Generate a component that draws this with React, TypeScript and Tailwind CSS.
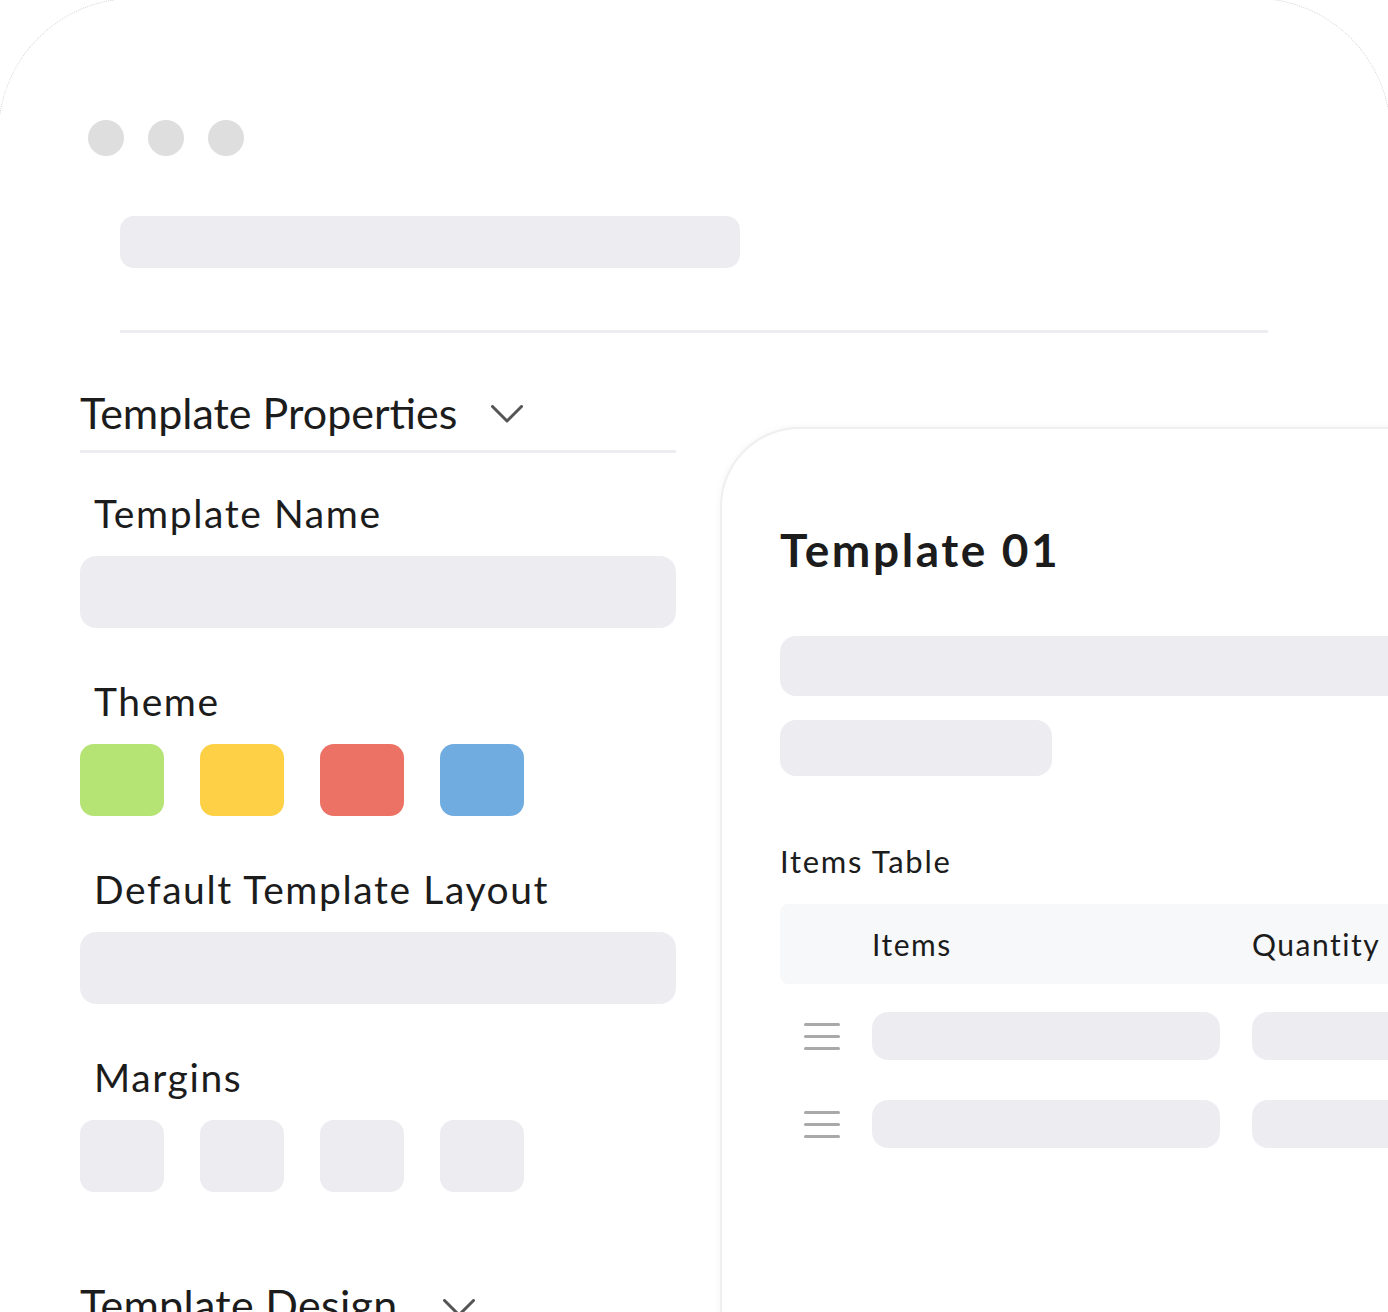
import React from "react";

function Chevron() {
  return (
    <svg width="32" height="18" viewBox="0 0 32 18" fill="none" className="shrink-0">
      <path d="M1.5 1.5 L16 16 L30.5 1.5" stroke="#555555" strokeWidth="3" strokeLinecap="round" strokeLinejoin="round" />
    </svg>
  );
}

function Hamburger() {
  return (
    <div className="flex w-[36px] shrink-0 flex-col gap-[9px]">
      <div className="h-[3px] w-full rounded-full bg-[#a9a9a9]" />
      <div className="h-[3px] w-full rounded-full bg-[#a9a9a9]" />
      <div className="h-[3px] w-full rounded-full bg-[#a9a9a9]" />
    </div>
  );
}

function Label({ text, mt }: { text: string; mt: string }) {
  return (
    <div className={`${mt} mb-[15px] h-[56px] pl-[14px] text-[39px] leading-[56px] tracking-[1.6px] text-[#1c1c1c] whitespace-nowrap`}>
      {text}
    </div>
  );
}

export default function App() {
  const font = { fontFamily: "Lato, 'Open Sans', sans-serif" };
  return (
    <div className="relative h-[1312px] w-[1388px] overflow-hidden bg-white" style={font}>
      <div className="-ml-[2px] -mt-[2px] h-[1500px] w-[1393px] rounded-[136px] border border-dotted border-[#d4d4d4]">
        {/* window dots */}
        <div className="flex gap-[24px] pl-[89px] pt-[121px]">
          <div className="h-[36px] w-[36px] rounded-full bg-[#dedede]" />
          <div className="h-[36px] w-[36px] rounded-full bg-[#dedede]" />
          <div className="h-[36px] w-[36px] rounded-full bg-[#dedede]" />
        </div>
        {/* search bar */}
        <div className="ml-[121px] mt-[60px] h-[52px] w-[620px] rounded-[14px] bg-[#ededf1]" />
        {/* divider */}
        <div className="ml-[121px] mt-[62px] h-[3px] w-[1148px] bg-[#ededf1]" />

        <div className="mt-[53px] flex items-start gap-[44px] pl-[81px]">
          {/* left column */}
          <div className="flex w-[596px] shrink-0 flex-col">
            <div className="flex h-[48px] items-center gap-[34px]">
              <div className="mt-[6px] text-[43px] leading-[48px] text-[#1c1c1c] whitespace-nowrap">Template Properties</div>
              <div className="mt-[8px]"><Chevron /></div>
            </div>
            <div className="mt-[16px] h-[3px] w-full bg-[#ededf1]" />

            <Label text="Template Name" mt="mt-[32px]" />
            <div className="h-[72px] w-full rounded-[16px] bg-[#ededf1]" />

            <Label text="Theme" mt="mt-[45px]" />
            <div className="flex gap-[36px]">
              <div className="h-[72px] w-[84px] rounded-[14px] bg-[#b5e474]" />
              <div className="h-[72px] w-[84px] rounded-[14px] bg-[#fdd046]" />
              <div className="h-[72px] w-[84px] rounded-[14px] bg-[#ec7266]" />
              <div className="h-[72px] w-[84px] rounded-[14px] bg-[#70ace0]" />
            </div>

            <Label text="Default Template Layout" mt="mt-[45px]" />
            <div className="h-[72px] w-full rounded-[16px] bg-[#ededf1]" />

            <Label text="Margins" mt="mt-[45px]" />
            <div className="flex gap-[36px]">
              <div className="h-[72px] w-[84px] rounded-[14px] bg-[#ededf1]" />
              <div className="h-[72px] w-[84px] rounded-[14px] bg-[#ededf1]" />
              <div className="h-[72px] w-[84px] rounded-[14px] bg-[#ededf1]" />
              <div className="h-[72px] w-[84px] rounded-[14px] bg-[#ededf1]" />
            </div>

            <div className="mt-[89px] flex h-[48px] items-center gap-[46px]">
              <div className="text-[43px] leading-[48px] tracking-[0.3px] text-[#1c1c1c] whitespace-nowrap">Template Design</div>
              <div className="mt-[6px]"><Chevron /></div>
            </div>
          </div>

          {/* right preview card */}
          <div className="mt-[41px] h-[1000px] w-[800px] shrink-0 rounded-tl-[80px] border-2 border-[#efeff1] bg-white pl-[58px] pt-[93px] shadow-[0_0_6px_rgba(0,0,0,0.05)]">
            <div className="h-[56px] text-[46px] font-bold leading-[56px] tracking-[2.6px] text-[#1c1c1c] whitespace-nowrap">Template 01</div>
            <div className="mt-[58px] h-[60px] w-full rounded-[16px] bg-[#ededf1]" />
            <div className="mt-[24px] h-[56px] w-[272px] rounded-[16px] bg-[#ededf1]" />
            <div className="mt-[65px] h-[40px] text-[31px] leading-[40px] tracking-[1.7px] text-[#1c1c1c] whitespace-nowrap">Items Table</div>
            <div className="mt-[23px] flex h-[80px] items-center rounded-[8px] bg-[#f7f8fa] pl-[92px]">
              <div className="w-[380px] text-[30px] tracking-[1.5px] text-[#1c1c1c]">Items</div>
              <div className="text-[30px] tracking-[1.5px] text-[#1c1c1c]">Quantity</div>
            </div>
            <div className="mt-[28px] flex items-center gap-[32px] pl-[24px]">
              <Hamburger />
              <div className="h-[48px] w-[348px] rounded-[16px] bg-[#ededf1]" />
              <div className="h-[48px] w-[200px] rounded-[16px] bg-[#ededf1]" />
            </div>
            <div className="mt-[40px] flex items-center gap-[32px] pl-[24px]">
              <Hamburger />
              <div className="h-[48px] w-[348px] rounded-[16px] bg-[#ededf1]" />
              <div className="h-[48px] w-[200px] rounded-[16px] bg-[#ededf1]" />
            </div>
          </div>
        </div>
      </div>
    </div>
  );
}
